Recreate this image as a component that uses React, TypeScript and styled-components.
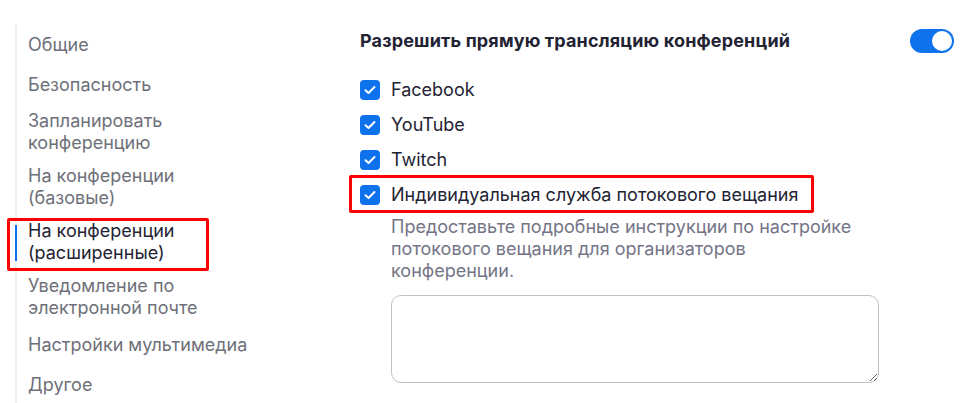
import React from 'react';
import styled, { createGlobalStyle } from 'styled-components';

const GlobalStyle = createGlobalStyle`
    html, body {
        margin: 0;
        padding: 0;
        overflow: hidden;
        background: #fff;
    }
    body {
        font-family: Inter, "Noto Sans", sans-serif;
        font-size: 18px;
        line-height: 22px;
        color: #232333;
    }
`;

const navItems = [
    'Общие',
    'Безопасность',
    'Запланировать\nконференцию',
    'На конференции\n(базовые)',
    'На конференции\n(расширенные)',
    'Уведомление по\nэлектронной почте',
    'Настройки мультимедиа',
    'Другое',
];
const ACTIVE = 4;

const platforms = ['Facebook', 'YouTube', 'Twitch', 'Индивидуальная служба потокового вещания'];

function CheckIcon() {
    return (
        <svg width="12" height="10" viewBox="0 0 12 10" fill="none">
            <path d="M1.5 5.2 L4.5 8 L10.5 2" stroke="#fff" strokeWidth="2" strokeLinecap="round" strokeLinejoin="round"/>
        </svg>
    );
}

function App() {
    return (
        <>
            <GlobalStyle/>
            <Page>
                <Sidebar>
                    {navItems.map((text, i) => (
                        <NavItem key={text} $active={i === ACTIVE}>
                            <span>{text}</span>
                            {i === ACTIVE && <NavMark/>}
                        </NavItem>
                    ))}
                </Sidebar>
                <Content>
                    <TitleRow>
                        <Title>Разрешить прямую трансляцию конференций</Title>
                        <Toggle aria-checked="true" role="switch"><Knob/></Toggle>
                    </TitleRow>
                    <CheckList>
                        {platforms.map((p, i) => (
                            <CheckRow key={p}>
                                <Box><CheckIcon/></Box>
                                <Label>{p}</Label>
                                {i === platforms.length - 1 && <RowMark/>}
                            </CheckRow>
                        ))}
                    </CheckList>
                    <Hint>
                        Предоставьте подробные инструкции по настройке потокового вещания для организаторов конференции.
                    </Hint>
                    <Field/>
                </Content>
            </Page>
        </>
    );
}

const Page = styled.div`
    display: grid;
    grid-template-columns: 360px 594px;
    align-items: start;
`;

const Sidebar = styled.nav`
    display: flex;
    flex-direction: column;
    margin: 24px 0 0 15px;
    padding-left: 11px;
    border-left: 2px solid #eff0f3;
`;

const NavItem = styled.div<{ $active?: boolean }>`
    position: relative;
    display: flex;
    align-items: center;
    min-height: 40px;
    padding: 6px 0 5px;
    box-sizing: border-box;
    white-space: pre-line;
    color: ${p => p.$active ? '#232333' : '#6e7079'};
    &::before{
        content: ${p => p.$active ? '""' : 'none'};
        position: absolute;
        left: -13px;
        top: 11px;
        width: 2px;
        height: 36px;
        background: #0e72ed;
    }
`;

const NavMark = styled.div`
    position: absolute;
    left: -21px;
    top: 4px;
    width: 202px;
    height: 53px;
    box-sizing: border-box;
    border: 3px solid #ff0000;
    border-radius: 2px;
`;

const Content = styled.main`
    display: flex;
    flex-direction: column;
    padding-top: 29px;
`;

const TitleRow = styled.div`
    display: flex;
    align-items: center;
    justify-content: space-between;
    height: 24px;
`;

const Title = styled.h2`
    margin: 0;
    font-size: 18px;
    font-weight: 700;
    line-height: 22px;
    letter-spacing: 0.15px;
    color: #232333;
`;

const Toggle = styled.div`
    display: flex;
    align-items: center;
    justify-content: flex-end;
    width: 44px;
    height: 24px;
    padding: 2px;
    box-sizing: border-box;
    border-radius: 12px;
    background: #0e72ed;
`;

const Knob = styled.div`
    width: 20px;
    height: 20px;
    border-radius: 50%;
    background: #fff;
`;

const CheckList = styled.div`
    display: flex;
    flex-direction: column;
    gap: 13px;
    margin-top: 26px;
`;

const CheckRow = styled.label`
    position: relative;
    display: flex;
    align-items: center;
    gap: 11px;
    height: 22px;
`;

const Box = styled.span`
    display: flex;
    align-items: center;
    justify-content: center;
    width: 20px;
    height: 20px;
    border-radius: 4px;
    background: #0e72ed;
`;

const Label = styled.span`
    color: #232333;
`;

const RowMark = styled.div`
    position: absolute;
    left: -11px;
    top: -9px;
    width: 465px;
    height: 38px;
    box-sizing: border-box;
    border: 3px solid #ff0000;
    border-radius: 2px;
`;

const Hint = styled.p`
    margin: 10px 0 0 31px;
    width: 466px;
    color: #747487;
`;

const Field = styled.textarea`
    margin: 13px 0 0 31px;
    width: 488px;
    height: 88px;
    box-sizing: border-box;
    border: 1px solid #c1c1c9;
    border-radius: 10px;
    resize: vertical;
    font: inherit;
    outline: none;
`;

export default App;
